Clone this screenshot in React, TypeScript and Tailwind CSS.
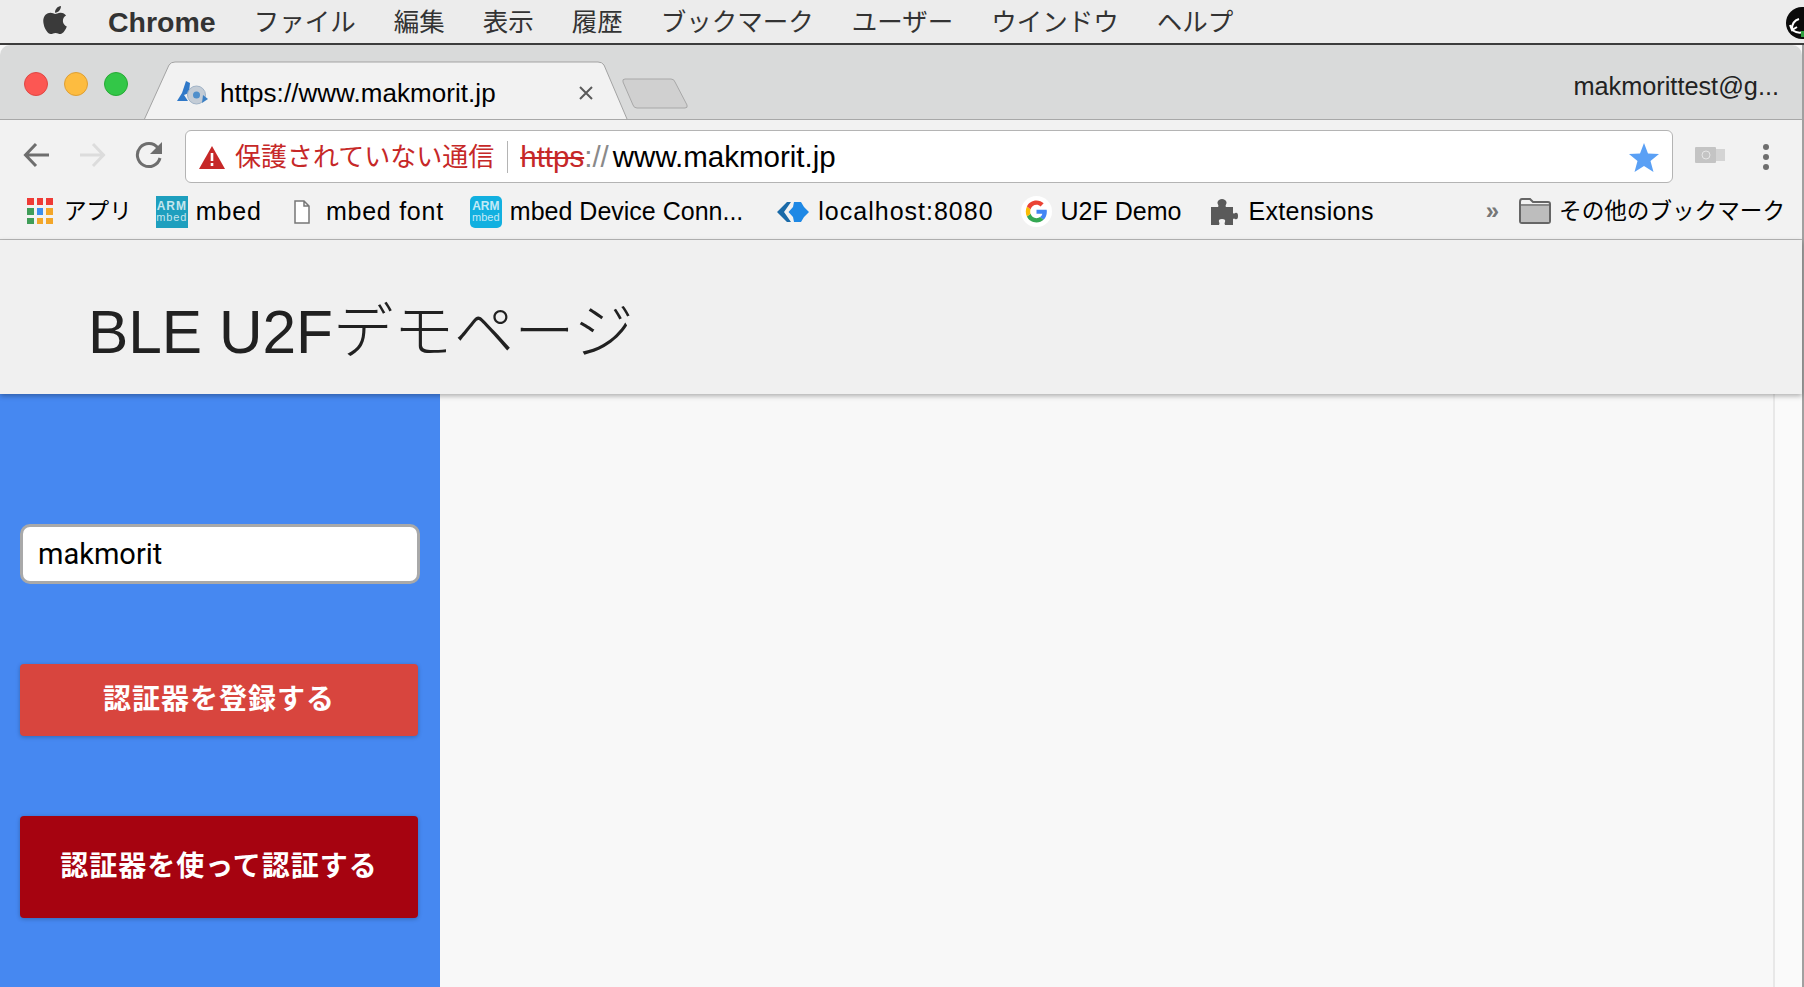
import { FaApple } from "react-icons/fa";

const sans = "font-['Liberation_Sans','Noto_Sans_CJK_JP',sans-serif]";

const menus = ["ファイル", "編集", "表示", "履歴", "ブックマーク", "ユーザー", "ウインドウ", "ヘルプ"];

const appColors = ["#ef3b36", "#ef3b36", "#ef3b36", "#3f9d58", "#3b8ff0", "#f3a629", "#3f9d58", "#f3a629", "#f3a629"];

const ArmIcon = ({ rounded, color }: { rounded?: boolean; color: string }) => (
  <div
    className={`w-8 h-8 flex flex-col items-center justify-center text-white/75 font-bold leading-[11px] text-[12px] ${rounded ? "rounded-[5px]" : ""}`}
    style={{ backgroundColor: color }}
  >
    <span>ARM</span>
    <span className="font-normal text-[11px]">mbed</span>
  </div>
);

const Bookmark = ({ icon, label, className }: { icon: React.ReactNode; label: string; className?: string }) => (
  <div className={`flex items-center shrink-0 ${className ?? ""}`}>
    {icon}
    <span className="whitespace-nowrap">{label}</span>
  </div>
);

export default function App() {
  return (
    <div className={`w-[1804px] h-[987px] overflow-hidden flex flex-col bg-[#f8f8f8] text-black ${sans}`}>
      {/* mac menu bar */}
      <div className="h-[45px] shrink-0 flex items-center bg-[#ececec] border-b-2 border-[#3c3c3c] text-[25.5px] text-[#333] pl-[40px] relative">
        <FaApple className="w-[30px] h-[32px] text-[#3a3a3a] mr-[38px] -mt-[4px]" />
        <div className="flex items-center gap-[38px] mt-[1px]">
          <span className="font-bold text-[28.5px] text-[#333]">Chrome</span>
          {menus.map((m) => (
            <span key={m}>{m}</span>
          ))}
        </div>
        <svg className="absolute right-0 top-[7px]" width="18" height="32" viewBox="0 0 18 32">
          <circle cx="16" cy="16" r="16" fill="#0a0a0a" />
          <path d="M6 22 Q6 14 13 12 M4 18 L6 23 L11 20 M6 23 Q12 27 17 25" fill="none" stroke="#fff" strokeWidth="2" />
          <rect x="15" y="24" width="3" height="6" fill="#2f9e3f" />
        </svg>
      </div>

      {/* browser window */}
      <div className="flex-1 min-h-0 flex flex-col border-r-2 border-[#a0a0a0]">
        {/* tab strip */}
        <div className="h-[75px] shrink-0 flex bg-[#d9dada] border-b border-[#a8a8a8] rounded-tl-[10px] rounded-tr-[10px] relative">
          <div className="w-[144px] shrink-0 flex items-center gap-[16px] pl-[24px] pt-[4px]">
            <div className="w-[24px] h-[24px] rounded-full bg-[#fc5753] border border-[#df4744]" />
            <div className="w-[24px] h-[24px] rounded-full bg-[#fdbc40] border border-[#de9f34]" />
            <div className="w-[24px] h-[24px] rounded-full bg-[#33c748] border border-[#27aa35]" />
          </div>
          <div className="relative w-[484px] shrink-0 h-[75px] flex items-center pl-[32px] pr-[35px] pt-[20px]">
            <svg className="absolute left-0 top-0" width="484" height="75" viewBox="0 0 484 75">
              <path d="M0.5 74 L25 20 Q27 17 31 17 L454 17 Q458 17 460 20 L483 74 Z" fill="#f2f2f2" />
              <path d="M0.5 74 L25 20 Q27 17 31 17 L454 17 Q458 17 460 20 L483 74" fill="none" stroke="#a3a3a3" />
            </svg>
            <svg className="relative mr-[12px] shrink-0" width="32" height="24" viewBox="0 0 32 24">
              <path d="M10 0 L14 2 L13 12 L8 14 L12 20 L1 20 L6 12 Z" fill="#2f78c8" />
              <circle cx="20.5" cy="14" r="9" fill="#c3ccd6" stroke="#9fb2c6" />
              <circle cx="20.500" cy="14" r="3.500" fill="#4f8fcb" />
              <path d="M27 14 L32 18 L26 22 Z" fill="#3a7fc4" />
            </svg>
            <span className="relative text-[26px] leading-none whitespace-nowrap tracking-[0.05px]">https://www.makmorit.jp</span>
            <svg className="relative ml-auto shrink-0" width="14" height="14" viewBox="0 0 14 14">
              <path d="M1 1 L13 13 M13 1 L1 13" stroke="#5a5a5a" strokeWidth="2" />
            </svg>
          </div>
          <svg className="-ml-[6px] mt-[33px] shrink-0" width="66" height="31" viewBox="0 0 66 31">
            <path d="M1 4 Q0 1 3 1 L49 1 Q52 1 53 4 L65 27 Q66 30 63 30 L15 30 Q12 30 11 27 Z" fill="#d0d0d0" stroke="#a8a8a8" />
          </svg>
          <div className="ml-auto mr-[23px] mt-[24px] text-[25.3px] leading-[34px] text-[#222] whitespace-nowrap">makmorittest@g...</div>
        </div>

        {/* toolbar */}
        <div className="h-[66px] shrink-0 flex items-start bg-[#f2f2f2] pt-[10px] pl-[23px] relative">
          <svg className="mt-[12px] shrink-0" width="27" height="26" viewBox="0 0 27 26">
            <path d="M26 13 H3 M13 2 L2.500 13 L13 24" fill="none" stroke="#6e6e6e" strokeWidth="3" />
          </svg>
          <svg className="mt-[12px] ml-[29px] shrink-0" width="27" height="26" viewBox="0 0 27 26">
            <path d="M1 13 H24 M14 2 L24.500 13 L14 24" fill="none" stroke="#dcdcdc" strokeWidth="3" />
          </svg>
          <svg className="mt-[11px] ml-[29px] shrink-0" width="28" height="28" viewBox="0 0 28 28">
            <path d="M23 7 A11.500 11.500 0 1 0 25 17" fill="none" stroke="#6e6e6e" strokeWidth="3" />
            <path d="M27 1 V13 H15 Z" fill="#6e6e6e" />
          </svg>
          <div className="ml-[22px] w-[1488px] h-[53px] shrink-0 flex items-center bg-white border border-[#b4b4b4] rounded-[6px] pl-[13px] pr-[13px] pt-[1px]">
            <svg className="shrink-0" width="26" height="23" viewBox="0 0 26 23">
              <path d="M13 0 L26 23 H0 Z" fill="#c62828" />
              <path d="M11.700 7 H14.300 V15 H11.700 Z M11.700 17 H14.300 V20 H11.700 Z" fill="#fff" />
            </svg>
            <span className="ml-[10px] text-[26px] text-[#c62828] whitespace-nowrap">保護されていない通信</span>
            <div className="ml-[13px] w-px h-[32px] bg-[#b4b4b4] shrink-0" />
            <div className="ml-[12px] text-[29.5px] whitespace-nowrap leading-none">
              <span className="text-[#c62828] line-through">https</span>
              <span className="text-[#8a8a8a] pr-[4px]">://</span>
              <span>www.makmorit.jp</span>
            </div>
            <svg className="ml-auto shrink-0" width="30" height="29" viewBox="0 0 30 29">
              <path d="M15 0 L19 10.500 L30 11 L21.500 18 L24.500 29 L15 23 L5.500 29 L8.500 18 L0 11 L11 10.500 Z" fill="#5aa0f5" />
            </svg>
          </div>
          <svg className="ml-[22px] mt-[17px] shrink-0" width="30" height="16" viewBox="0 0 30 16">
            <rect x="0" y="0" width="21" height="16" rx="1" fill="#c4c4c4" />
            <rect x="21" y="2" width="9" height="12" fill="#d4d4d4" />
            <circle cx="11" cy="8" r="4" fill="none" stroke="#e6e6e6" />
          </svg>
          <div className="ml-[38px] mt-[14px] flex flex-col gap-[4px] shrink-0">
            <div className="w-[6px] h-[6px] rounded-full bg-[#6e6e6e]" />
            <div className="w-[6px] h-[6px] rounded-full bg-[#6e6e6e]" />
            <div className="w-[6px] h-[6px] rounded-full bg-[#6e6e6e]" />
          </div>
        </div>

        {/* bookmarks */}
        <div className="h-[54px] shrink-0 flex items-center bg-[#f2f2f2] border-b border-[#b8b8b8] pl-[27px] pb-[2px] text-[25px] text-black">
          <Bookmark
            className="text-[22.6px]"
            label="アプリ"
            icon={
              <div className="w-[26px] h-[26px] mr-[11px] grid grid-cols-3 gap-[3px]">
                {appColors.map((c, i) => (
                  <div key={i} style={{ backgroundColor: c }} />
                ))}
              </div>
            }
          />
          <Bookmark className="ml-[24px] tracking-[0.9px]" label="mbed" icon={<div className="mr-[8px]"><ArmIcon color="#1e9fbe" /></div>} />
          <Bookmark
            className="ml-[32px] tracking-[0.75px]"
            label="mbed font"
            icon={
              <svg className="mr-[16px]" width="16" height="24" viewBox="0 0 16 24">
                <path d="M1 1 H10 L15 6 V23 H1 Z M10 1 V6 H15" fill="#fff" stroke="#777" strokeWidth="1.500" />
              </svg>
            }
          />
          <Bookmark className="ml-[26px]" label="mbed Device Conn..." icon={<div className="mr-[8px]"><ArmIcon rounded color="#12b0e0" /></div>} />
          <Bookmark
            className="ml-[34px] tracking-[1px]"
            label="localhost:8080"
            icon={
              <svg className="mr-[9px]" width="32" height="20" viewBox="0 0 32 20">
                <path d="M0 10 L10 0 H14 L7 10 L14 20 H10 Z" fill="#1a6aa8" />
                <path d="M11.500 10 L16 5 L17 0 H24 L27 5 L32 10 L27 15 L24 20 H17 L16 15 Z" fill="#1e88e5" />
              </svg>
            }
          />
          <Bookmark
            className="ml-[27px]"
            label="U2F Demo"
            icon={
              <svg className="mr-[9px]" width="31" height="31" viewBox="0 0 48 48">
                <circle cx="24" cy="24" r="24" fill="#fff" />
                <path d="M40 24.500c0-1.300-.1-2.300-.3-3.300H24v6.200h9c-.4 2.300-1.700 4-3.600 5.300l5.500 4.200C38.200 33.900 40 29.600 40 24.500z" fill="#4285f4" />
                <path d="M24 41c4.500 0 8.300-1.500 11-4.100l-5.500-4.200c-1.500 1-3.300 1.600-5.500 1.600-4.300 0-7.900-2.900-9.200-6.800l-5.600 4.300C11.500 37.300 17.300 41 24 41z" fill="#34a853" />
                <path d="M14.800 27.500c-.7-2.100-.7-4.900 0-7l-5.600-4.300c-2.400 4.800-2.400 10.800 0 15.600z" fill="#fbbc05" />
                <path d="M24 13.700c2.400 0 4.600.8 6.300 2.500l4.800-4.800C32.300 8.800 28.500 7 24 7c-6.700 0-12.500 3.700-14.800 9.200l5.600 4.300c1.300-3.900 4.900-6.800 9.200-6.800z" fill="#ea4335" />
              </svg>
            }
          />
          <Bookmark
            className="ml-[29px] tracking-[0.3px]"
            label="Extensions"
            icon={
              <svg className="mr-[10px]" width="28" height="28" viewBox="0 0 28 28" fill="#5a5a5a">
                <path d="M1 9 H8 Q9 8 8 6.500 Q6.500 4 9 2 Q12 0 15 2 Q17.500 4 16 6.500 Q15 8 16 9 H23 V15 Q24 16 25 15 Q28 14 28 18 Q28 22 25 21 Q24 20 23 21 V27 H15 Q14 25 15 24 Q16 21 12 21 Q8 21 9 24 Q10 25 9 27 H1 Z" />
              </svg>
            }
          />
          <div className="ml-auto flex items-center pr-[17px]">
            <span className="text-[#777] font-bold text-[24px] leading-none mr-[20px]">»</span>
            <svg className="mr-[8px]" width="32" height="26" viewBox="0 0 32 26">
              <path d="M1 4 Q1 1 3 1 H11 L14 4 H29 Q31 4 31 6 V23 Q31 25 29 25 H3 Q1 25 1 23 Z" fill="#f2f2f2" stroke="#666" strokeWidth="2" />
              <rect x="2" y="8" width="28" height="16" fill="#bdbdbd" />
              <path d="M1 7 H31" stroke="#666" strokeWidth="1.500" />
            </svg>
            <span className="whitespace-nowrap text-[22.6px]">その他のブックマーク</span>
          </div>
        </div>

        {/* page header */}
        <div className="h-[154px] shrink-0 flex items-center bg-[#f0f0f0] pl-[88px] pt-[30px] text-[#212121] shadow-[0_2px_5px_rgba(0,0,0,0.3)] relative z-10">
          <h1 className="text-[60.4px] font-light leading-none whitespace-nowrap">BLE U2Fデモページ</h1>
        </div>

        {/* body */}
        <div className="flex-1 flex min-h-0">
          <div className="w-[440px] shrink-0 bg-[#4688f1] flex flex-col pl-[20px] pr-[20px] pt-[130px]">
            <input
              readOnly
              value="makmorit"
              className="w-[400px] h-[60px] bg-white border-[3px] border-[#a9a9a9] rounded-[10px] px-[15px] text-[29px] text-black font-['Roboto',sans-serif] outline-none"
            />
            <button className="mt-[80px] w-[398px] h-[72px] rounded-[4px] bg-[#d8453e] text-white font-bold text-[28px] tracking-[1px] shadow-[0_1px_4px_rgba(0,0,0,0.25)]">
              認証器を登録する
            </button>
            <button className="mt-[80px] w-[398px] h-[102px] rounded-[4px] bg-[#a60310] text-white font-bold text-[28px] tracking-[1px] shadow-[0_1px_4px_rgba(0,0,0,0.25)]">
              認証器を使って認証する
            </button>
          </div>
          <div className="flex-1 bg-[#f8f8f8]" />
          <div className="w-[29px] shrink-0 bg-[#fafafa] border-l-2 border-[#e8e8e8]" />
        </div>
      </div>
    </div>
  );
}
